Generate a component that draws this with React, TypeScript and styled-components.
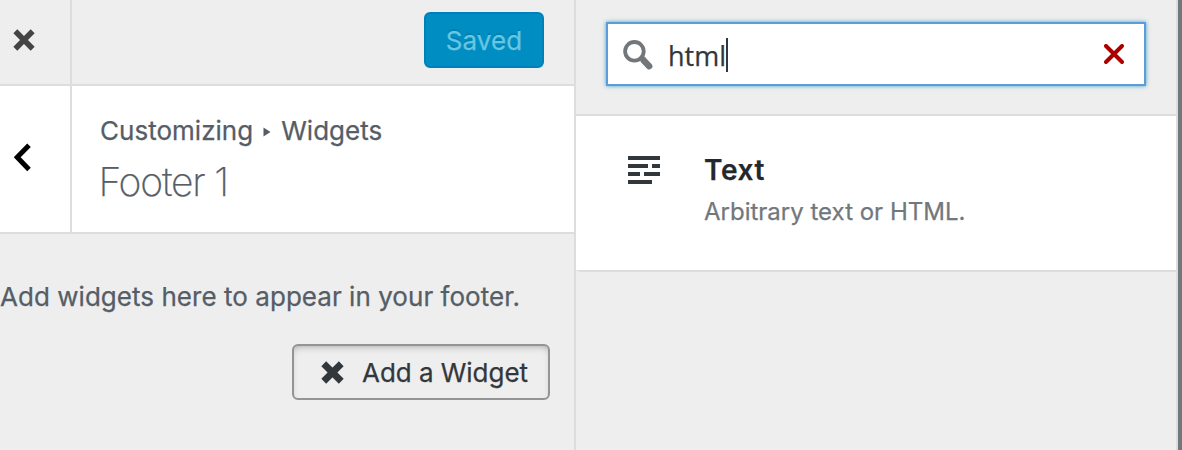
import React from "react";
import styled, { createGlobalStyle } from "styled-components";

const GlobalStyle = createGlobalStyle`
  * { box-sizing: border-box; }
  body {
    margin: 0;
    overflow: hidden;
    background: #eee;
    font-family: Inter, "Liberation Sans", sans-serif;
    font-weight: 400;
    -webkit-text-stroke: 0.25px currentColor;
    color: #555d66;
  }
  button { font-family: inherit; font-weight: inherit; }
`;

const Screen = styled.main`
  display: flex;
  width: 1182px;
  height: 450px;
  background: #eee;
`;

const Sidebar = styled.section`
  width: 576px;
  border-right: 2px solid #ddd;
`;

const TopBar = styled.header`
  display: flex;
  justify-content: space-between;
  height: 86px;
  border-bottom: 2px solid #ddd;
`;

const NavButton = styled.button<{ $top: number; $left: number }>`
  width: 72px;
  height: 100%;
  display: flex;
  padding: ${(p) => p.$top}px 0 0 ${(p) => p.$left}px;
  border: 0;
  border-right: 2px solid #ddd;
  background: transparent;
`;

const SavedButton = styled.button`
  width: 120px;
  height: 56px;
  margin: 12px 30px 0 0;
  padding: 0;
  border: 2px solid #0080ba;
  border-radius: 6px;
  background: #008ec2;
  color: #66c6e4;
  font-size: 26px;
  letter-spacing: 0.1px;
  text-shadow: 0 -2px 0 rgba(0, 0, 0, 0.1);
`;

const SectionTitle = styled.div`
  display: flex;
  height: 148px;
  border-bottom: 2px solid #ddd;
  background: #fff;
`;

const TitleText = styled.div`
  padding: 28px 0 0 28px;
`;

const Breadcrumb = styled.div`
  display: flex;
  align-items: center;
  height: 32px;
  font-size: 26px;
  letter-spacing: 0.02px;
  white-space: nowrap;

  svg { margin: 4px 10px 0 10px; }
`;

const Heading = styled.h1`
  margin: 1px 0 0 -1.5px;
  height: 70px;
  font-size: 39px;
  line-height: 70px;
  font-weight: 200;
  letter-spacing: -1.2px;
  white-space: nowrap;
`;

const Notice = styled.p`
  margin: 0;
  padding-top: 47px;
  font-size: 26px;
  line-height: 32px;
  letter-spacing: 0.04px;
  white-space: nowrap;
`;

const AddButton = styled.button`
  display: flex;
  align-items: center;
  width: 258px;
  height: 56px;
  margin: 31px 24px 0 auto;
  padding: 0 0 0 27px;
  border: 2px solid #949494;
  border-radius: 6px;
  background: #eee;
  box-shadow: inset 0 4px 10px -6px rgba(0, 0, 0, 0.5);
  color: #32373c;
  font-size: 26px;
  letter-spacing: -0.04px;
  white-space: nowrap;

  svg { margin-right: 18px; flex: none; }
`;

const Library = styled.section`
  width: 602px;
  border-right: 2px solid #ddd;
`;

const SearchBar = styled.div`
  height: 116px;
  padding: 22px 30px 0;
  border-bottom: 2px solid #ddd;
`;

const SearchField = styled.div`
  display: flex;
  align-items: center;
  height: 64px;
  padding: 0 20px 0 15px;
  border: 2px solid #5b9dd9;
  background: #fff;
  box-shadow: 0 0 4px rgba(30, 140, 190, 0.8);
`;

const Query = styled.span`
  margin-left: 14px;
  padding-top: 4px;
  font-family: "Open Sans", "Noto Sans", sans-serif;
  font-size: 27px;
  line-height: 36px;
  color: #32373c;
`;

const Caret = styled.i`
  width: 2px;
  height: 34px;
  margin: 2px auto 0 0;
  background: #32373c;
`;

const WidgetItem = styled.article`
  display: flex;
  height: 156px;
  padding: 40px 0 0 52px;
  border-bottom: 2px solid #ddd;
  border-bottom-left-radius: 8px 2px;
  background: #fff;
`;

const WidgetText = styled.div`
  padding-left: 44px;
  white-space: nowrap;
`;

const WidgetName = styled.h2`
  margin: -3px 0 0;
  font-size: 28px;
  line-height: 34px;
  font-weight: 600;
  letter-spacing: 0.6px;
  color: #23282d;
`;

const WidgetDescription = styled.p`
  margin: 11px 0 0;
  font-size: 24px;
  line-height: 28px;
  color: #72777c;
`;

const PreviewEdge = styled.div`
  flex: 1;
  background: #72777c;
`;

const Cross = ({ size, color, weight, round = false }: { size: number; color: string; weight: number; round?: boolean }) => {
  const inset = round ? weight / 2 : weight * 0.36 + 0.3;
  return (
    <svg width={size} height={size} viewBox={`0 0 ${size} ${size}`} style={{ display: "block" }}>
      <path
        d={`M${inset} ${inset}L${size - inset} ${size - inset}M${size - inset} ${inset}L${inset} ${size - inset}`}
        stroke={color}
        strokeWidth={weight}
        strokeLinecap={round ? "round" : "butt"}
      />
    </svg>
  );
};

const BackArrow = () => (
  <svg width="17" height="29" viewBox="0 0 17 29">
    <path d="M15 2.3 3.2 14.3 15 26.4" fill="none" stroke="#000" strokeWidth="5" />
  </svg>
);

const SearchIcon = () => (
  <svg width="31" height="32" viewBox="0 0 31 32">
    <circle cx="11.4" cy="13.3" r="9.3" fill="none" stroke="#72777c" strokeWidth="3.8" />
    <path d="M17.8 19.2 21 21.6" stroke="#72777c" strokeWidth="5" />
    <path d="M20.5 22.2 26.2 28.2" stroke="#72777c" strokeWidth="6.4" strokeLinecap="round" />
  </svg>
);

const TextIcon = () => (
  <svg width="32" height="28" viewBox="0 0 32 28" fill="#32373c">
    <path d="M0 0h32v4H0zM0 8h20v4H0zM24 8h8v4h-8zM0 16h12v4H0zM16 16h16v4H16zM0 24h24v4H0z" />
  </svg>
);

export default function App() {
  return (
    <>
      <GlobalStyle />
      <Screen>
        <Sidebar>
          <TopBar>
            <NavButton $top={29} $left={13} aria-label="Close">
              <Cross size={22} color="#444" weight={5.6} />
            </NavButton>
            <SavedButton>Saved</SavedButton>
          </TopBar>
          <SectionTitle>
            <NavButton $top={57} $left={14} aria-label="Back">
              <BackArrow />
            </NavButton>
            <TitleText>
              <Breadcrumb>
                <span>Customizing</span>
                <svg width="8" height="10" viewBox="0 0 8 10">
                  <path d="M.5.5 7.5 5 .5 9.5z" fill="#555d66" />
                </svg>
                <span>Widgets</span>
              </Breadcrumb>
              <Heading>Footer 1</Heading>
            </TitleText>
          </SectionTitle>
          <Notice>Add widgets here to appear in your footer.</Notice>
          <AddButton>
            <Cross size={23} color="#32373c" weight={6.8} />
            Add a Widget
          </AddButton>
        </Sidebar>
        <Library>
          <SearchBar>
            <SearchField>
              <SearchIcon />
              <Query>html</Query>
              <Caret />
              <Cross size={20} color="#a00" weight={4} round />
            </SearchField>
          </SearchBar>
          <WidgetItem>
            <TextIcon />
            <WidgetText>
              <WidgetName>Text</WidgetName>
              <WidgetDescription>Arbitrary text or HTML.</WidgetDescription>
            </WidgetText>
          </WidgetItem>
        </Library>
        <PreviewEdge />
      </Screen>
    </>
  );
}
